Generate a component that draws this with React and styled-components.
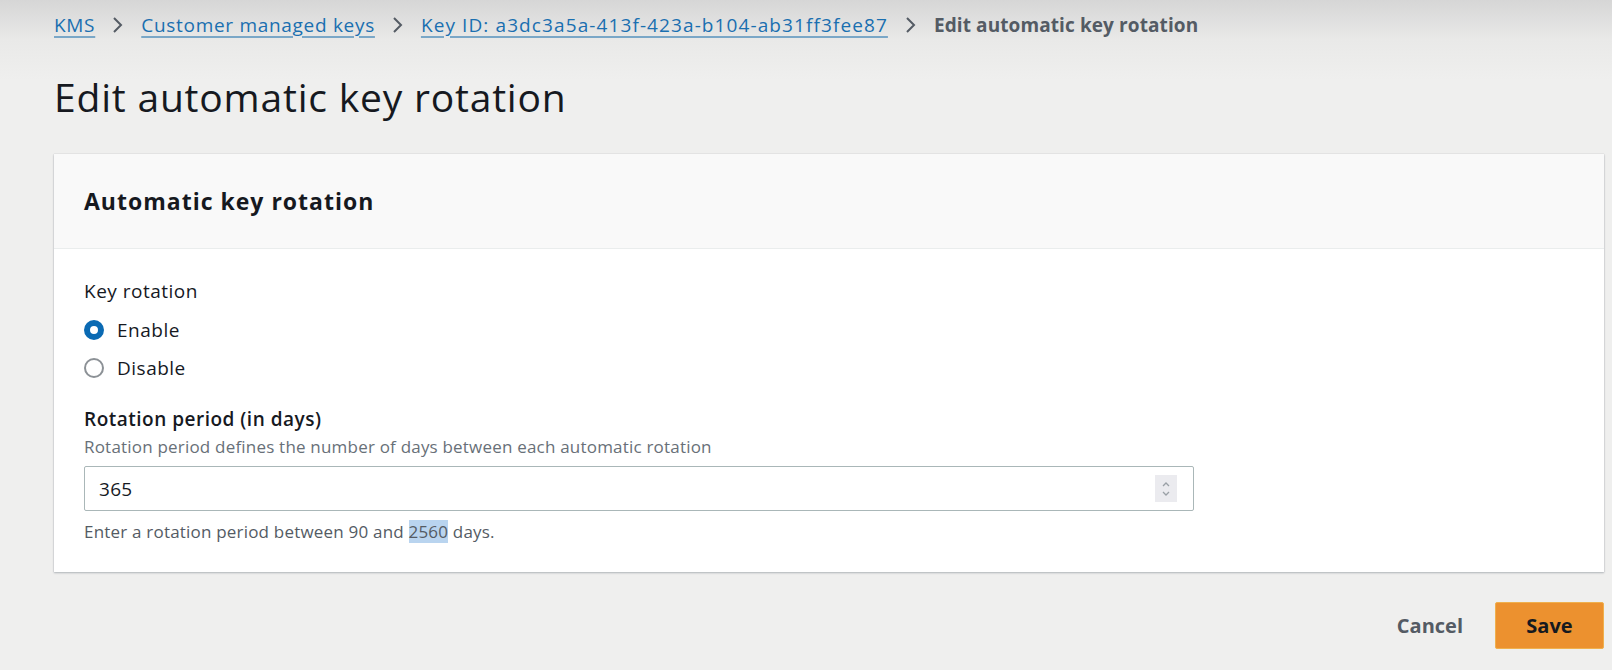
import React from "react";
import styled, { createGlobalStyle } from "styled-components";

const GlobalStyle = createGlobalStyle`
  html, body {
    margin: 0;
    padding: 0;
  }
  body {
    font-family: "Open Sans", "Noto Sans", sans-serif;
    color: #16191f;
    background: #efefee;
  }
`;

const Page = styled.div`
  width: 1612px;
  height: 670px;
  box-sizing: border-box;
  padding: 10px 8px 0 54px;
  background: linear-gradient(to bottom, #d6d6d6 0px, #e9e9e8 40px, #efefee 80px, #efefee 100%);
  overflow: hidden;
`;

const Breadcrumbs = styled.nav`
  display: flex;
  align-items: center;
  gap: 17px;
  font-size: 19px;
  letter-spacing: 0.7px;
  height: 30px;
`;

const Crumb = styled.a`
  color: #1a6fb0;
  text-decoration: underline;
  text-decoration-color: #7aa7c7;
  text-underline-offset: 4px;
  text-decoration-thickness: 2px;
  letter-spacing: ${(p) => (p.$wide ? "1.1px" : "inherit")};
`;

const Current = styled.span`
  color: #545b64;
  font-weight: 700;
  letter-spacing: 0.1px;
`;

const Chevron = () => (
  <svg width="12" height="20" viewBox="0 0 12 20">
    <path d="M2 3 L9 10 L2 17" fill="none" stroke="#545b64" strokeWidth="2" />
  </svg>
);

const Title = styled.h1`
  margin: 34px 0 0;
  font-size: 39px;
  font-weight: 400;
  letter-spacing: 0.8px;
  line-height: 46px;
  color: #16191f;
`;

const Card = styled.section`
  margin-top: 34px;
  width: 1550px;
  background: #ffffff;
  box-shadow: 0 1px 2px rgba(0, 22, 40, 0.25), 0 0 1px rgba(0, 22, 40, 0.2);
`;

const CardHeader = styled.header`
  height: 95px;
  box-sizing: border-box;
  padding: 0 30px;
  display: flex;
  align-items: center;
  background: #f9f9f9;
  border-bottom: 1px solid #eaeded;
`;

const CardTitle = styled.h2`
  margin: 0;
  font-size: 23px;
  font-weight: 700;
  letter-spacing: 1px;
`;

const CardBody = styled.div`
  padding: 29px 30px 29px;
`;

const Label = styled.div`
  font-size: 19px;
  letter-spacing: 0.5px;
  color: #16191f;
  font-weight: ${(p) => (p.$strong ? 600 : 400)};
  line-height: 26px;
`;

const RadioList = styled.div`
  display: flex;
  flex-direction: column;
  gap: 12px;
  margin-top: 13px;
`;

const RadioRow = styled.label`
  display: flex;
  align-items: center;
  gap: 13px;
  font-size: 19px;
  letter-spacing: 0.5px;
  line-height: 26px;
  color: #16191f;
`;

const RadioDot = styled.span`
  width: 20px;
  height: 20px;
  box-sizing: border-box;
  border-radius: 50%;
  border: ${(p) => (p.$checked ? "6px solid #0a6ab3" : "2px solid #8c9196")};
  background: #fff;
`;

const Field = styled.div`
  margin-top: 25px;
`;

const Description = styled.div`
  margin-top: 4px;
  font-size: 17px;
  letter-spacing: 0.2px;
  color: #687078;
  line-height: 22px;
`;

const InputBox = styled.div`
  margin-top: 8px;
  width: 1110px;
  height: 45px;
  box-sizing: border-box;
  border: 1px solid #aab7b8;
  border-radius: 2px;
  display: flex;
  align-items: center;
  justify-content: space-between;
  padding: 0 16px 0 14px;
  font-size: 19px;
  letter-spacing: 0.3px;
`;

const Spinner = styled.span`
  width: 22px;
  height: 27px;
  background: #ebebef;
  display: flex;
  align-items: center;
  justify-content: center;
`;

const Hint = styled.div`
  margin-top: 10px;
  font-size: 17px;
  letter-spacing: 0.2px;
  color: #545b64;
  line-height: 22px;
`;

const Highlight = styled.span`
  background: #b9d4ef;
`;

const Actions = styled.div`
  display: flex;
  justify-content: flex-end;
  align-items: center;
  gap: 32px;
  margin-top: 30px;
  width: 1550px;
`;

const LinkButton = styled.button`
  background: none;
  border: none;
  font-family: inherit;
  font-size: 20px;
  font-weight: 700;
  color: #545b64;
  padding: 0;
`;

const PrimaryButton = styled.button`
  width: 109px;
  height: 47px;
  background: #ec912f;
  border: 1px solid #f0b04d;
  border-radius: 2px;
  font-family: inherit;
  font-size: 20px;
  font-weight: 700;
  color: #16191f;
`;

export default function App() {
  return (
    <>
      <GlobalStyle />
      <Page>
        <Breadcrumbs>
          <Crumb>KMS</Crumb>
          <Chevron />
          <Crumb>Customer managed keys</Crumb>
          <Chevron />
          <Crumb $wide>Key ID: a3dc3a5a-413f-423a-b104-ab31ff3fee87</Crumb>
          <Chevron />
          <Current>Edit automatic key rotation</Current>
        </Breadcrumbs>
        <Title>Edit automatic key rotation</Title>
        <Card>
          <CardHeader>
            <CardTitle>Automatic key rotation</CardTitle>
          </CardHeader>
          <CardBody>
            <Label>Key rotation</Label>
            <RadioList>
              <RadioRow>
                <RadioDot $checked />
                Enable
              </RadioRow>
              <RadioRow>
                <RadioDot />
                Disable
              </RadioRow>
            </RadioList>
            <Field>
              <Label $strong>Rotation period (in days)</Label>
              <Description>
                Rotation period defines the number of days between each automatic rotation
              </Description>
              <InputBox>
                <span>365</span>
                <Spinner>
                  <svg width="10" height="18" viewBox="0 0 10 18">
                    <path d="M2 6 L5 3 L8 6 M2 12 L5 15 L8 12" fill="none" stroke="#9aa0a6" strokeWidth="1.3" />
                  </svg>
                </Spinner>
              </InputBox>
              <Hint>
                Enter a rotation period between 90 and <Highlight>2560</Highlight> days.
              </Hint>
            </Field>
          </CardBody>
        </Card>
        <Actions>
          <LinkButton>Cancel</LinkButton>
          <PrimaryButton>Save</PrimaryButton>
        </Actions>
      </Page>
    </>
  );
}
